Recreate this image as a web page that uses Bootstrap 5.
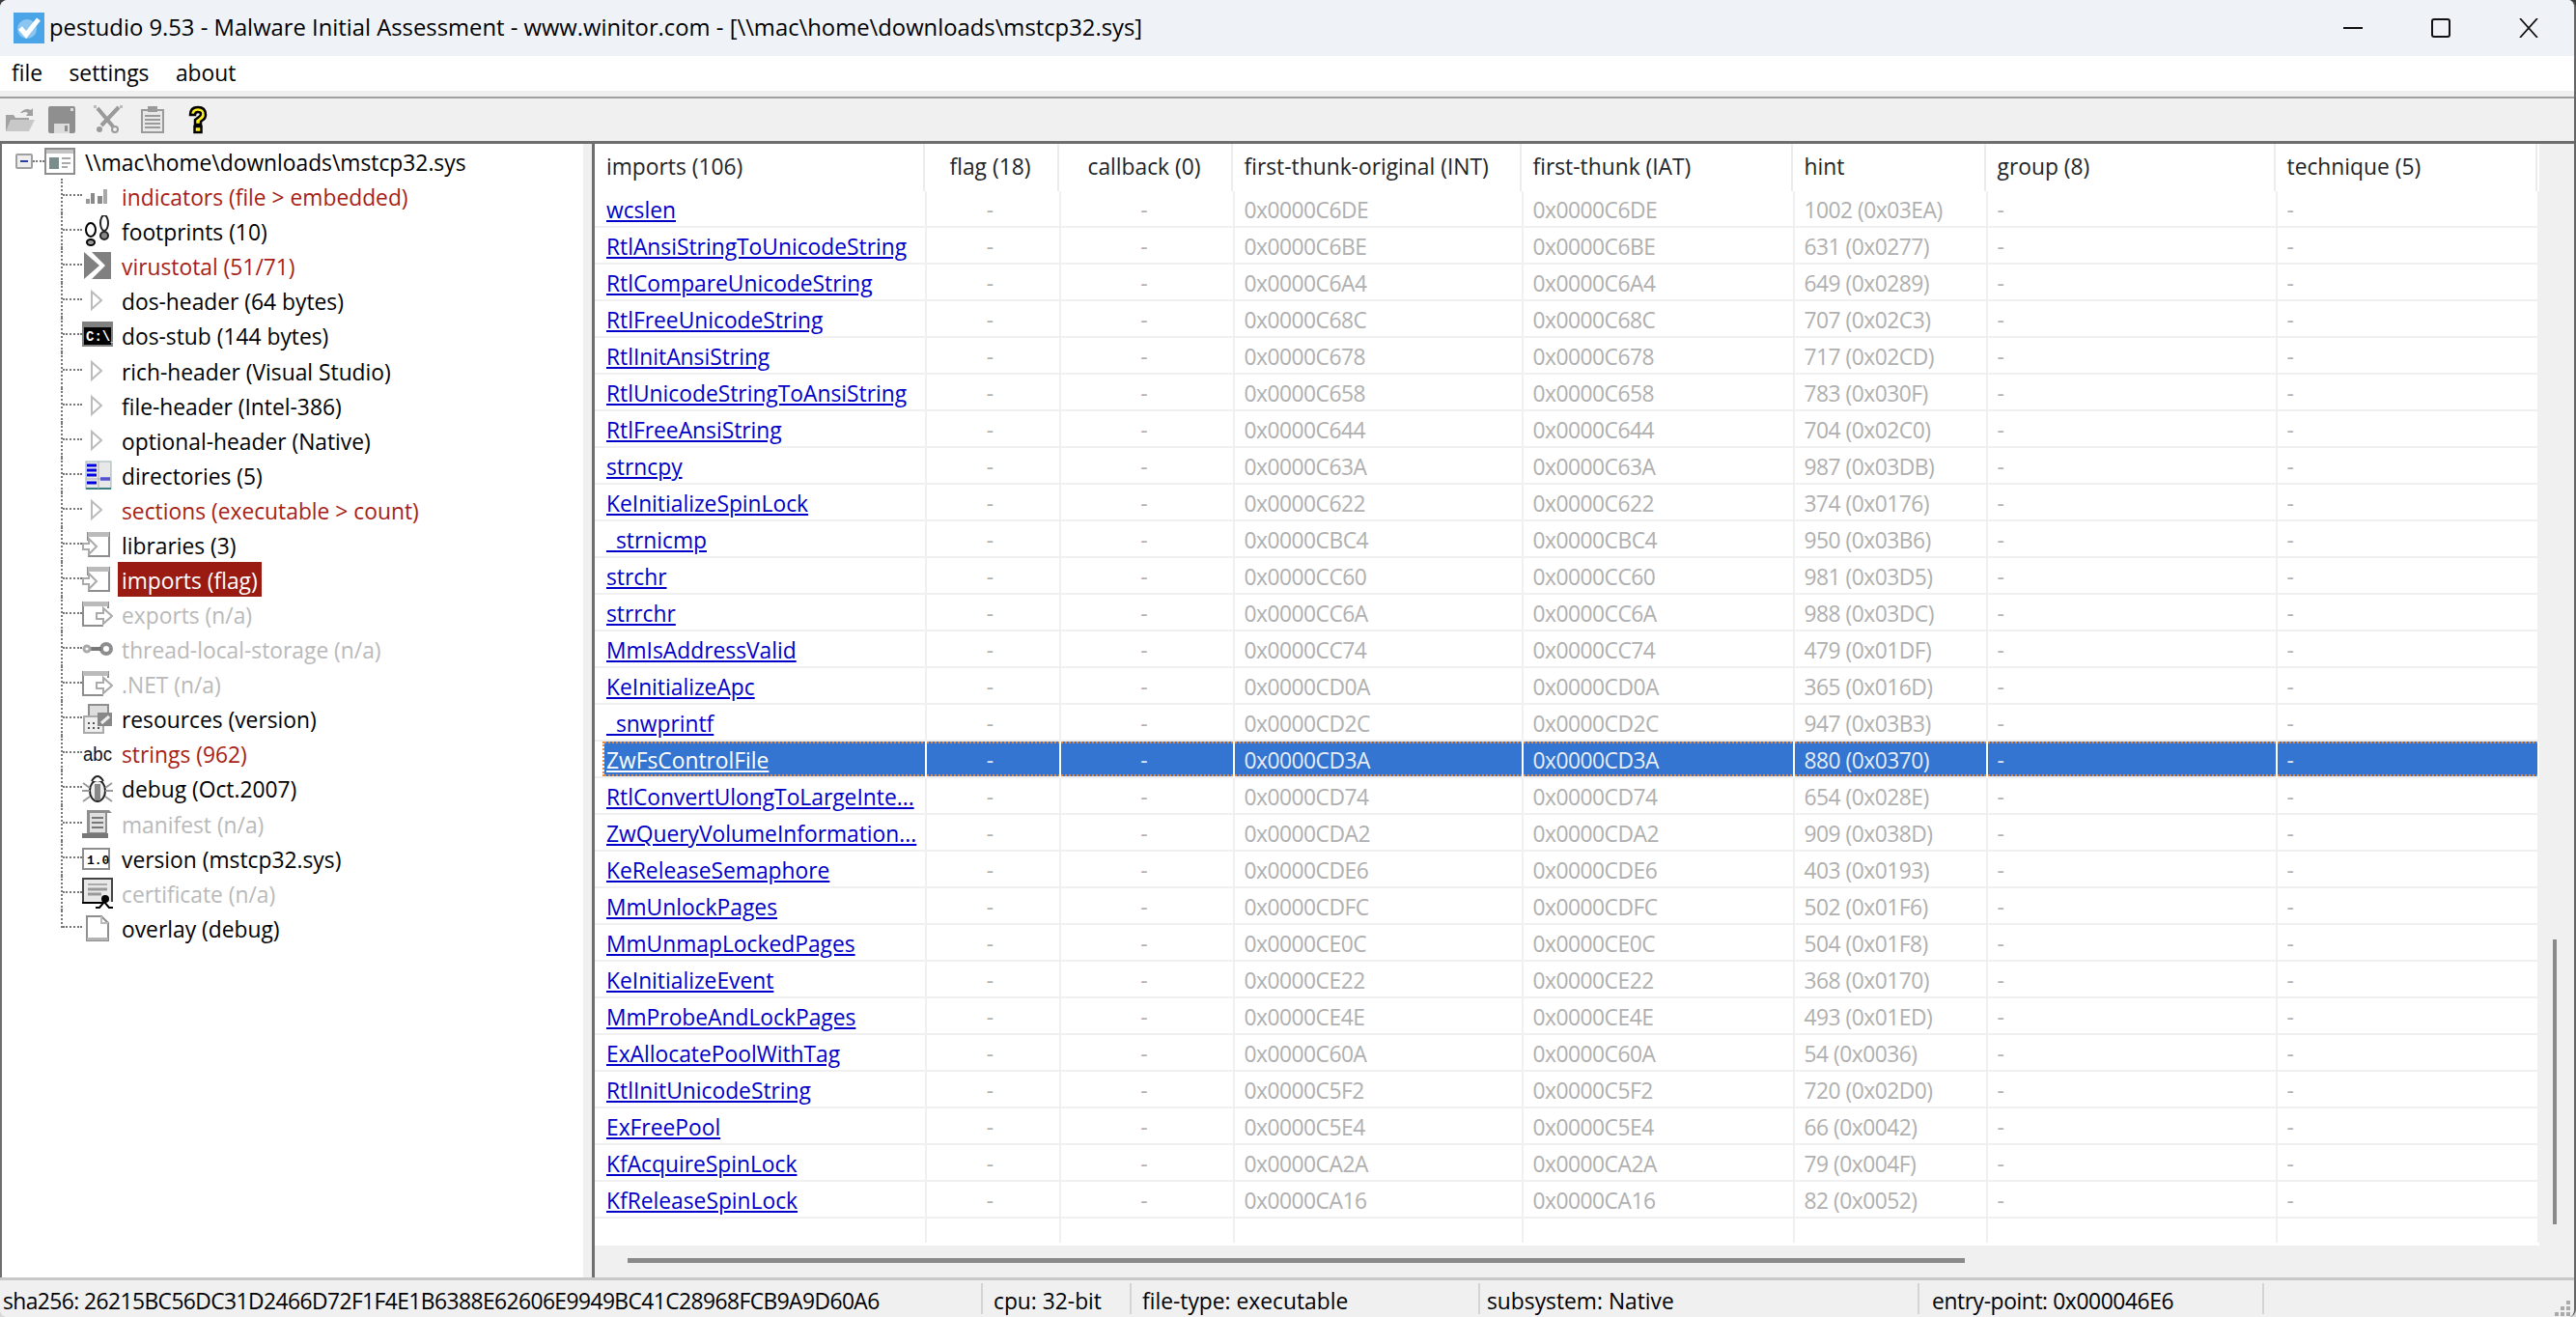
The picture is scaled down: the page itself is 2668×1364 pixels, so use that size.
<!DOCTYPE html>
<html lang="en">
<head>
    <meta charset="UTF-8">
    <title>pestudio 9.53</title>
    <link href="https://cdn.jsdelivr.net/npm/bootstrap@5.3.0/dist/css/bootstrap.min.css" rel="stylesheet">
    <style>
        html, body { height: 100%; overflow: hidden; }
        body { background: linear-gradient(#3a3a3a 50%, #d8d8d8 50%); font-family: "Open Sans", "Noto Sans", sans-serif; font-size: 22.8px; color: #000; }
        .app-window { height: 100vh; background: #f0f0f0; border-radius: 8px; border-right: 2px solid #666; overflow: hidden; }
        .title-bar { height: 58px; background: #eff3f8; padding-left: 14px; flex: none; font-size: 23.8px; }
        .title-icon { width: 32px; height: 32px; margin-right: 5px; }
        .win-btn { width: 20px; height: 20px; }
        .win-controls { gap: 71px; padding-right: 37px; }
        .menu-bar { height: 36px; background: #fff; padding-left: 12px; gap: 27.5px; flex: none; }
        .bar-rule { height: 8px; background: #f0f0f0; border-bottom: 2px solid #a0a0a0; flex: none; }
        .tool-bar { height: 44px; background: #f0f0f0; padding-left: 6px; flex: none; }
        .tool-bar svg:nth-child(2) { margin-left: 14px; }
        .tool-bar svg:nth-child(3) { margin-left: 19px; }
        .tool-bar svg:nth-child(4) { margin-left: 19px; }
        .tool-bar svg:nth-child(5) { margin-left: 25px; }
        .pane-area { min-height: 0; border-top: 3px solid #6e6e6e; }
        .tree-pane { width: 604px; flex: none; background: #fff; border-left: 2px solid #6e6e6e; }
        .tree-row { height: 36.08px; white-space: nowrap; }
        .tree-root { padding-left: 14px; }
        .tree-minus { width: 18px; height: 16px; border: 2px solid #a0a0a0; background: #eee; border-radius: 2px; }
        .tree-minus::after { content: ""; display: block; width: 8px; height: 2px; background: #2b3f9e; margin: 5px 3px; }
        .root-dots { width: 12px; border-top: 2px dotted #777; }
        .tree-child { padding-left: 61px; }
        .tree-link { align-self: stretch; width: 22px; flex: none; border-left: 2px dotted #777; }
        .tree-link-in { height: 50%; border-bottom: 2px dotted #777; }
        .tree-child:last-child .tree-link { align-self: flex-start; height: 50%; }
        .tree-child:last-child .tree-link-in { height: 100%; }
        .tree-ico { width: 32px; height: 32px; flex: none; margin-right: 8px; }
        .tree-txt { padding: 0 4px; height: 36px; line-height: 39px; margin-left: -3px; }
        .tree-root .tree-txt { margin-left: 2px; padding-left: 0; }
        .st-alert { color: #a81e16; }
        .st-off { color: #b9b9b9; }
        .st-sel { background: #991b12; color: #fff; }
        .splitter { width: 9px; flex: none; background: #f0f0f0; }
        .list-pane { border-left: 3px solid #6e6e6e; background: #f0f0f0; min-width: 0; }
        .list-top { min-height: 0; }
        .list-view { width: 2014px; flex: none; height: 1141px; background: #fff; overflow: hidden; }
        .imp-table { table-layout: fixed; width: 2014px; margin: 0; border-collapse: separate; border-spacing: 0; }
        .imp-table th, .imp-table td { padding: 0 0 0 9.5px; background: transparent; border: 0; white-space: nowrap; overflow: hidden; box-shadow: none; }
        .imp-table th { height: 49px; font-weight: 400; border-right: 2px solid transparent; box-shadow: inset -2px 0 0 #ececec; background-clip: padding-box; vertical-align: middle; }
        .imp-table th:first-child { padding-left: 12px; }
        .imp-table td { height: 38px; padding-top: 3px; line-height: 33px; border-bottom: 2px solid #f0f0f0; border-right: 2px solid #f0f0f0; color: #b0b0b0; vertical-align: middle; }
        .imp-table td:first-child { padding: 0; }
        .imp-table .mid { text-align: center; padding-left: 0; padding-right: 6px; }
        .imp-table .hex-val { letter-spacing: -0.5px; }
        .imp-table a { color: #0000c8; }
        .name-cell { margin-left: 8px; padding: 3px 0 0 4px; height: 36px; line-height: 33px; overflow: hidden; }
        .imp-table tr.pick td { color: #e6ecf6; border-right-color: #fff; }
        /* focus rectangle of the selected row */
        .imp-table tr.pick td:not(:first-child), tr.pick .name-cell {
            background:
                repeating-linear-gradient(90deg, #e58a3c 0 2px, #3375d0 2px 4px) top / 100% 2px no-repeat,
                repeating-linear-gradient(90deg, #e58a3c 0 2px, #3375d0 2px 4px) bottom / 100% 2px no-repeat,
                #3375d0;
            background-clip: padding-box;
        }
        tr.pick .name-cell { border-left: 2px dotted #e58a3c; padding-left: 2px; }
        .imp-table tr.pick a { color: #fff; }
        .imp-table tr.blank td { height: 25px; border-bottom: 0; }
        .v-scroll { width: 36px; padding-left: 14px; }
        .v-thumb { width: 4px; height: 295px; background: #8a8a8a; margin-top: 824px; }
        .h-scroll { height: 34px; padding-left: 34px; }
        .h-thumb { width: 1385px; height: 5px; background: #8a8a8a; margin-top: 14px; }
        .status-bar { height: 41px; flex: none; border-top: 3px solid #c8c8c8; background: #f0f0f0; padding-left: 3px; }
        .status-cell { height: 32px; line-height: 32px; border-right: 2px solid #d4d4d4; white-space: nowrap; padding: 3px 0 0 11px; flex: none; }
        .cell-sha { width: 1015px; padding-left: 0; letter-spacing: -0.56px; }
        .cell-cpu { width: 154px; }
        .cell-type { width: 361px; }
        .cell-sub { width: 455px; padding-left: 7px; }
        .cell-entry { width: 357px; padding-left: 13px; letter-spacing: -0.4px; }
        .status-grip { width: 18px; height: 18px; margin-right: 3px; }
    </style>
</head>
<body>
    <div class="app-window d-flex flex-column">
        <div class="title-bar d-flex align-items-center">
            <svg class="title-icon" viewBox="0 0 32 32"><rect width="32" height="32" fill="#4aa5e8"/><circle cx="14" cy="17" r="10" fill="#8cc6f0"/><path d="M7 16l6 7L26 7" fill="none" stroke="#fff" stroke-width="5"/></svg>
            <span class="flex-grow-1">pestudio 9.53 - Malware Initial Assessment - www.winitor.com - [\\mac\home\downloads\mstcp32.sys]</span>
            <div class="win-controls d-flex">
                <svg class="win-btn" viewBox="0 0 20 20"><rect y="9" width="20" height="2" fill="#111"/></svg>
                <svg class="win-btn" viewBox="0 0 20 20"><rect x="1" y="1" width="18" height="18" rx="2" fill="none" stroke="#111" stroke-width="2"/></svg>
                <svg class="win-btn" viewBox="0 0 20 20"><path d="M1 0l18 20M19 0L1 20" stroke="#111" stroke-width="1.8"/></svg>
            </div>
        </div>
        <div class="menu-bar d-flex align-items-center"><span>file</span><span>settings</span><span>about</span></div>
        <div class="bar-rule"></div>
        <div class="tool-bar d-flex align-items-center" id="toolBar"></div>
        <div class="pane-area d-flex flex-grow-1">
            <div class="tree-pane" id="tree"></div>
            <div class="splitter"></div>
            <div class="list-pane d-flex flex-column flex-grow-1">
                <div class="list-top d-flex flex-grow-1">
                    <div class="list-view">
                        <table class="table imp-table">
                            <colgroup><col style="width:344px"><col style="width:139px"><col style="width:180px"><col style="width:299px"><col style="width:281px"><col style="width:200px"><col style="width:300px"><col style="width:271px"></colgroup>
                            <thead><tr><th>imports (106)</th><th class="mid">flag (18)</th><th class="mid">callback (0)</th><th>first-thunk-original (INT)</th><th>first-thunk (IAT)</th><th>hint</th><th>group (8)</th><th>technique (5)</th></tr></thead>
                            <tbody id="rows"></tbody>
                        </table>
                    </div>
                    <div class="v-scroll"><div class="v-thumb"></div></div>
                </div>
                <div class="h-scroll"><div class="h-thumb"></div></div>
            </div>
        </div>
        <div class="status-bar d-flex align-items-center">
            <div class="status-cell cell-sha">sha256: 26215BC56DC31D2466D72F1F4E1B6388E62606E9949BC41C28968FCB9A9D60A6</div>
            <div class="status-cell cell-cpu">cpu: 32-bit</div>
            <div class="status-cell cell-type">file-type: executable</div>
            <div class="status-cell cell-sub">subsystem: Native</div>
            <div class="status-cell cell-entry">entry-point: 0x000046E6</div>
            <div class="flex-grow-1"></div>
            <svg class="status-grip align-self-end" viewBox="0 0 18 18" fill="#aaa"><rect x="13" y="1" width="4" height="4"/><rect x="13" y="7" width="4" height="4"/><rect x="7" y="7" width="4" height="4"/><rect x="13" y="13" width="4" height="4"/><rect x="7" y="13" width="4" height="4"/><rect x="1" y="13" width="4" height="4"/></svg>
        </div>
    </div>

    <script>
        // toolbar icons
        const tools = [
            '<svg width="30" height="28" viewBox="0 0 30 28"><path d="M0 9h8l2 3h14v14H0z" fill="#a2a2a2"/><path d="M0 26l5-12h25l-6 12z" fill="#c8c8c8"/><path d="M15 7q5-6 11-3l2-2v8h-7l2-3q-3-2-6 0z" fill="#a0a0a0"/></svg>',
            '<svg width="28" height="28" viewBox="0 0 28 28"><rect width="28" height="28" rx="2" fill="#8f8f8f"/><rect x="23" y="2" width="3" height="3" fill="#ddd"/><rect x="6" y="18" width="16" height="10" fill="#dcdcdc"/><rect x="17" y="20" width="3" height="6" fill="#8f8f8f"/></svg>',
            '<svg width="30" height="30" viewBox="0 0 30 30"><path d="M4 3l16 19M26 2L8 21" stroke="#9a9a9a" stroke-width="4"/><rect x="0" y="0" width="3" height="3" fill="#bbb"/><rect x="27" y="0" width="3" height="3" fill="#bbb"/><circle cx="6" cy="25" r="3" fill="#9a9a9a"/><circle cx="22" cy="25" r="3" fill="none" stroke="#9a9a9a" stroke-width="2"/></svg>',
            '<svg width="24" height="28" viewBox="0 0 24 28"><rect y="3" width="24" height="25" fill="#9a9a9a"/><rect x="2" y="5" width="20" height="21" fill="#e8e8e8"/><rect x="7" y="0" width="10" height="6" fill="#9a9a9a"/><path d="M4 10h16M4 14h16M4 18h16M4 22h16" stroke="#9a9a9a" stroke-width="2"/></svg>',
            '<svg width="20" height="30" viewBox="0 0 20 30"><path d="M2 10q0-8 8-8t8 8q0 4-4 6l-1 1v3H7v-5l4-3q2-1 2-3t-3-2-3 3z" fill="#ffee22" stroke="#000" stroke-width="2.5"/><rect x="6.5" y="22" width="7" height="6" fill="#ffee22" stroke="#000" stroke-width="2.5"/></svg>'
        ];
        document.getElementById('toolBar').innerHTML = tools.join('');

        // tree icons
        const gray = '#8e8e8e';
        const ico = {
            doc: `<rect x="1" y="3" width="30" height="26" fill="#fff" stroke="${gray}" stroke-width="2"/><rect x="2" y="4" width="28" height="4" fill="#c4c4c4"/><rect x="5" y="12" width="10" height="12" fill="#7a8c8c"/><path d="M18 13h9M18 18h9M18 22h6" stroke="#a8a8a8" stroke-width="2"/>`,
            bars: `<rect x="4" y="19" width="4" height="5" fill="#999"/><rect x="9" y="13" width="4" height="11" fill="#8a8a8a"/><rect x="16" y="16" width="5" height="8" fill="#8a8a8a"/><rect x="22" y="9" width="4" height="15" fill="#a8a8a8"/>`,
            feet: `<ellipse cx="9" cy="15" rx="5" ry="7" fill="#fff" stroke="#000" stroke-width="2"/><ellipse cx="9" cy="28" rx="4" ry="3" fill="#999" stroke="#000" stroke-width="2"/><ellipse cx="23" cy="8" rx="4" ry="8" fill="#fff" stroke="#222" stroke-width="2"/><ellipse cx="23" cy="21" rx="4" ry="4" fill="#888" stroke="#222" stroke-width="2"/>`,
            vt: `<rect x="2" y="2" width="28" height="28" fill="#808080"/><path d="M2 2h8l14 14-14 14H2l16-14z" fill="#fff"/>`,
            play: `<path d="M10 7l10 9-10 9z" fill="#fff" stroke="#bbb" stroke-width="2"/>`,
            cmd: `<rect y="2" width="32" height="26" fill="#808080"/><rect x="2" y="8" width="28" height="18" fill="#000"/><text x="4" y="22" font-family="Liberation Mono, monospace" font-size="14" font-weight="700" fill="#fff">C:\\_</text>`,
            grid: `<rect x="4" y="2" width="26" height="28" fill="#e8e8e8" stroke="#9ab0b0" stroke-width="1"/><path d="M5 6h10M5 11h10M5 16h10M19 20h10M5 24h10" stroke="#0000e0" stroke-width="3"/><path d="M4 30h26" stroke="#3a8080" stroke-width="2"/><path d="M17 2v28M4 20h26" stroke="#aaa" stroke-width="1"/>`,
            imp: `<path d="M6 12V4h22v24H7v-4" fill="#fff" stroke="${gray}" stroke-width="2"/><rect x="6" y="3" width="22" height="5" fill="#bbb"/><path d="M1 15h6v-5l8 8-8 8v-5H1z" fill="#fff" stroke="#aaa" stroke-width="2"/>`,
            exp: `<path d="M27 10V4H1v24h21" fill="#fff" stroke="${gray}" stroke-width="2"/><rect x="1" y="3" width="26" height="5" fill="#bbb"/><path d="M15 15h7v-5l9 8-9 8v-5h-7z" fill="#fff" stroke="#aaa" stroke-width="2"/>`,
            key: `<circle cx="25" cy="16" r="5" fill="#fff" stroke="${gray}" stroke-width="4"/><rect x="8" y="14" width="12" height="4" fill="#777"/><circle cx="5" cy="16" r="3" fill="#fff" stroke="#aaa" stroke-width="3"/>`,
            res: `<rect x="7" y="2" width="20" height="14" fill="#ddd" stroke="${gray}" stroke-width="2"/><rect x="2" y="14" width="20" height="17" fill="#eee" stroke="#aaa" stroke-width="2"/><path d="M6 21h2M11 21h2M16 21h2M6 26h2M11 26h2M16 26h2" stroke="#555" stroke-width="2"/><rect x="16" y="10" width="15" height="14" fill="#888"/><path d="M20 21l8-7" stroke="#eee" stroke-width="3"/>`,
            abc: `<text x="1" y="24" font-family="Liberation Sans, sans-serif" font-size="20" fill="#111" textLength="30" lengthAdjust="spacingAndGlyphs">abc</text>`,
            bug: `<ellipse cx="16" cy="19" rx="8" ry="11" fill="#eee" stroke="#222" stroke-width="2"/><rect x="13" y="12" width="6" height="17" fill="#888"/><path d="M10 9q6-10 12 0" fill="#fff" stroke="#222" stroke-width="2"/><path d="M1 11l7 5M31 11l-7 5M0 19h8M32 19h-8M1 30l7-5M31 30l-7-5" stroke="#999" stroke-width="2"/>`,
            man: `<path d="M5 2h23l3 3h-5v23H5z" fill="#8e8e8e"/><rect x="8" y="5" width="16" height="20" fill="#e0e0e0"/><path d="M10 10h12M10 15h12M10 20h12" stroke="#777" stroke-width="2"/><rect x="0" y="26" width="27" height="5" fill="#777"/>`,
            ver: `<rect x="1" y="6" width="27" height="21" fill="#fff" stroke="${gray}" stroke-width="2"/><text x="5" y="22" font-family="Liberation Mono, monospace" font-size="13" font-weight="700" fill="#000">1.0</text>`,
            cert: `<path d="M1 26V1h30v24" fill="#e8e8e8" stroke="#444" stroke-width="2"/><path d="M6 7h20" stroke="#aaa" stroke-width="2"/><path d="M6 12h20M6 17h14" stroke="#999" stroke-width="3"/><rect x="0" y="25" width="22" height="2" fill="#000"/><circle cx="24" cy="22" r="4" fill="#000"/><path d="M14 31h4l5-6 5 6h4" stroke="#000" stroke-width="2" fill="none"/>`,
            page: `<path d="M5 4h15l7 7v18H5z" fill="#fff" stroke="${gray}" stroke-width="2"/><path d="M20 4v7h7" fill="none" stroke="#bbb" stroke-width="2"/><rect x="5" y="26" width="22" height="3" fill="#b4b4b4"/>`
        };
        const svg = name => `<svg class="tree-ico" viewBox="0 0 32 32">${ico[name]}</svg>`;

        const nodes = [
            ['bars', 'indicators (file > embedded)', 'st-alert'],
            ['feet', 'footprints (10)', ''],
            ['vt', 'virustotal (51/71)', 'st-alert'],
            ['play', 'dos-header (64 bytes)', ''],
            ['cmd', 'dos-stub (144 bytes)', ''],
            ['play', 'rich-header (Visual Studio)', ''],
            ['play', 'file-header (Intel-386)', ''],
            ['play', 'optional-header (Native)', ''],
            ['grid', 'directories (5)', ''],
            ['play', 'sections (executable > count)', 'st-alert'],
            ['imp', 'libraries (3)', ''],
            ['imp', 'imports (flag)', 'st-sel'],
            ['exp', 'exports (n/a)', 'st-off'],
            ['key', 'thread-local-storage (n/a)', 'st-off'],
            ['exp', '.NET (n/a)', 'st-off'],
            ['res', 'resources (version)', ''],
            ['abc', 'strings (962)', 'st-alert'],
            ['bug', 'debug (Oct.2007)', ''],
            ['man', 'manifest (n/a)', 'st-off'],
            ['ver', 'version (mstcp32.sys)', ''],
            ['cert', 'certificate (n/a)', 'st-off'],
            ['page', 'overlay (debug)', '']
        ];
        const esc = s => s.replace(/&/g, '&amp;').replace(/>/g, '&gt;');
        document.getElementById('tree').innerHTML =
            `<div class="tree-row tree-root d-flex align-items-center"><span class="tree-minus"></span><span class="root-dots"></span>${svg('doc')}<span class="tree-txt">\\\\mac\\home\\downloads\\mstcp32.sys</span></div>
             <div>${nodes.map(n => `<div class="tree-row tree-child d-flex align-items-center"><div class="tree-link"><div class="tree-link-in"></div></div>${svg(n[0])}<span class="tree-txt ${n[2]}">${esc(n[1])}</span></div>`).join('')}</div>`;

        // imports list
        const imports = [
            ['wcslen', 'C6DE', '1002 (0x03EA)'], ['RtlAnsiStringToUnicodeString', 'C6BE', '631 (0x0277)'],
            ['RtlCompareUnicodeString', 'C6A4', '649 (0x0289)'], ['RtlFreeUnicodeString', 'C68C', '707 (0x02C3)'],
            ['RtlInitAnsiString', 'C678', '717 (0x02CD)'], ['RtlUnicodeStringToAnsiString', 'C658', '783 (0x030F)'],
            ['RtlFreeAnsiString', 'C644', '704 (0x02C0)'], ['strncpy', 'C63A', '987 (0x03DB)'],
            ['KeInitializeSpinLock', 'C622', '374 (0x0176)'], ['_strnicmp', 'CBC4', '950 (0x03B6)'],
            ['strchr', 'CC60', '981 (0x03D5)'], ['strrchr', 'CC6A', '988 (0x03DC)'],
            ['MmIsAddressValid', 'CC74', '479 (0x01DF)'], ['KeInitializeApc', 'CD0A', '365 (0x016D)'],
            ['_snwprintf', 'CD2C', '947 (0x03B3)'], ['ZwFsControlFile', 'CD3A', '880 (0x0370)'],
            ['RtlConvertUlongToLargeInte...', 'CD74', '654 (0x028E)'], ['ZwQueryVolumeInformation...', 'CDA2', '909 (0x038D)'],
            ['KeReleaseSemaphore', 'CDE6', '403 (0x0193)'], ['MmUnlockPages', 'CDFC', '502 (0x01F6)'],
            ['MmUnmapLockedPages', 'CE0C', '504 (0x01F8)'], ['KeInitializeEvent', 'CE22', '368 (0x0170)'],
            ['MmProbeAndLockPages', 'CE4E', '493 (0x01ED)'], ['ExAllocatePoolWithTag', 'C60A', '54 (0x0036)'],
            ['RtlInitUnicodeString', 'C5F2', '720 (0x02D0)'], ['ExFreePool', 'C5E4', '66 (0x0042)'],
            ['KfAcquireSpinLock', 'CA2A', '79 (0x004F)'], ['KfReleaseSpinLock', 'CA16', '82 (0x0052)']
        ];
        document.getElementById('rows').innerHTML = imports.map(r => `
            <tr class="${r[0] === 'ZwFsControlFile' ? 'pick' : ''}">
                <td><div class="name-cell"><a href="#">${r[0]}</a></div></td>
                <td class="mid">-</td>
                <td class="mid">-</td>
                <td class="hex-val">0x0000${r[1]}</td>
                <td class="hex-val">0x0000${r[1]}</td>
                <td class="hex-val">${r[2]}</td>
                <td>-</td>
                <td>-</td>
            </tr>`).join('') + '<tr class="blank"><td></td><td></td><td></td><td></td><td></td><td></td><td></td><td></td></tr>';
    </script>
    <script src="https://cdn.jsdelivr.net/npm/bootstrap@5.3.0/dist/js/bootstrap.bundle.min.js"></script>
</body>
</html>
